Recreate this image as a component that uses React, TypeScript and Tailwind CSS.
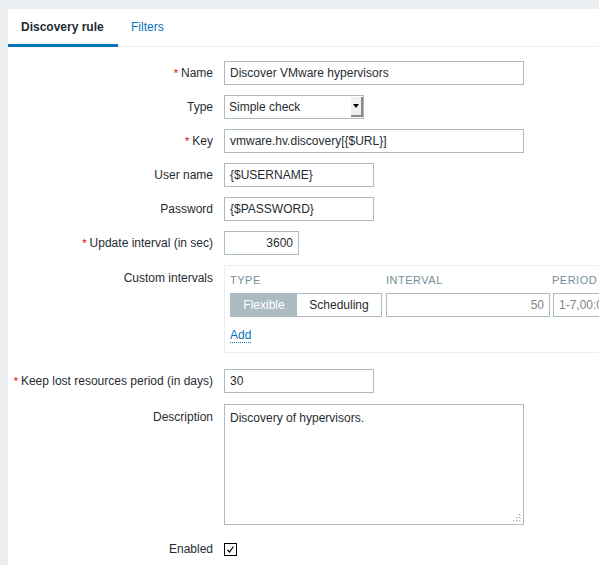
import React from "react";

const inputCls =
  "h-[24px] border border-[#acbbc2] bg-white px-[5px] flex items-center text-[12px] text-[#1f2c33]";

function Label({ text, required, top }: { text: string; required?: boolean; top?: boolean }) {
  return (
    <div
      className={`w-[205px] shrink-0 flex justify-end text-[12px] text-[#1f2c33] ${
        top ? "items-start pt-[4px]" : "items-center h-[24px]"
      }`}
    >
      {required && <span className="text-[#d40000] mr-[3px] text-[11px]">*</span>}
      <span>{text}</span>
    </div>
  );
}

function Row({ children, className = "" }: { children: React.ReactNode; className?: string }) {
  return <div className={`flex gap-[11px] ${className}`}>{children}</div>;
}

export default function App() {
  return (
    <div
      className="w-[599px] h-[565px] bg-[#ebeef0] pl-[8px] pt-[9px] overflow-hidden"
      style={{ fontFamily: '"Liberation Sans", Arial, sans-serif' }}
    >
      <div className="bg-white h-full pt-[1px]">
        {/* tabs */}
        <div className="flex h-[37px] border-b border-[#ebeef0] items-stretch">
          <div className="px-[13px] flex items-center border-b-[3px] border-[#0275b8] text-[12px] font-bold text-[#1f2c33] w-[110px] -mb-[1px]">
            Discovery rule
          </div>
          <div className="px-[13px] flex items-center text-[12px] text-[#0275b8] pb-[3px]">Filters</div>
        </div>

        {/* form */}
        <div className="pt-[14px] flex flex-col">
          <Row className="mb-[10px]">
            <Label text="Name" required />
            <div className={`${inputCls} w-[300px]`}>Discover VMware hypervisors</div>
          </Row>
          <Row className="mb-[10px]">
            <Label text="Type" />
            <div className="h-[24px] w-[140px] border border-[#acbbc2] bg-white flex items-stretch text-[12px] text-[#1f2c33]">
              <div className="flex-1 flex items-center pl-[4px]">Simple check</div>
              <div className="w-[12px] my-[1px] bg-[#f0f0f0] border-r-2 border-b-2 border-[#8a8a8a] flex items-center justify-center">
                <svg width="6" height="4" viewBox="0 0 6 4">
                  <path d="M0 0H6L3 4Z" fill="#000" />
                </svg>
              </div>
            </div>
          </Row>
          <Row className="mb-[10px]">
            <Label text="Key" required />
            <div className={`${inputCls} w-[300px]`}>vmware.hv.discovery[{"{$URL}"}]</div>
          </Row>
          <Row className="mb-[10px]">
            <Label text="User name" />
            <div className={`${inputCls} w-[150px]`}>{"{$USERNAME}"}</div>
          </Row>
          <Row className="mb-[10px]">
            <Label text="Password" />
            <div className={`${inputCls} w-[150px]`}>{"{$PASSWORD}"}</div>
          </Row>
          <Row className="mb-[10px]">
            <Label text="Update interval (in sec)" required />
            <div className={`${inputCls} w-[75px] justify-end`}>3600</div>
          </Row>
          <Row className="mb-[16px]">
            <Label text="Custom intervals" top />
            <div className="flex-1 border border-r-0 border-[#ebeef0] pl-[5px] pt-[8px] h-[88px]">
              <div className="flex text-[11px] tracking-[0.5px] text-[#768d99] mb-[7px] h-[12px] items-center">
                <div className="w-[156px]">TYPE</div>
                <div className="w-[166px]">INTERVAL</div>
                <div>PERIOD</div>
              </div>
              <div className="flex items-center">
                <div className="flex h-[24px] w-[152px] border border-[#acbbc2] text-[12px]">
                  <div className="w-[66px] bg-[#acbbc2] text-white flex items-center justify-center">Flexible</div>
                  <div className="flex-1 bg-white text-[#1f2c33] flex items-center justify-center">Scheduling</div>
                </div>
                <div className={`${inputCls} w-[164px] justify-end ml-[4px] text-[#7a8790]`}>50</div>
                <div className={`${inputCls} w-[60px] ml-[3px] text-[#7a8790] overflow-hidden whitespace-nowrap`}>
                  1-7,00:00-24:00
                </div>
              </div>
              <div className="mt-[10px] h-[18px] flex items-center">
                <span className="text-[12px] text-[#0275b8] border-b border-dotted border-[#0275b8] leading-[13px]">
                  Add
                </span>
              </div>
            </div>
          </Row>
          <Row className="mb-[11px]">
            <Label text="Keep lost resources period (in days)" required />
            <div className={`${inputCls} w-[150px]`}>30</div>
          </Row>
          <Row className="mb-[12px]">
            <Label text="Description" top />
            <div className="relative h-[121px] w-[300px] border border-[#acbbc2] bg-white px-[5px] pt-[4px] text-[12px] text-[#1f2c33]">
              Discovery of hypervisors.
              <svg className="absolute right-[1px] bottom-[1px]" width="10" height="10" viewBox="0 0 10 10">
                <rect x="7" y="1" width="1" height="1" fill="#999" />
                <rect x="7" y="4" width="1" height="1" fill="#999" />
                <rect x="4" y="4" width="1" height="1" fill="#999" />
                <rect x="7" y="7" width="1" height="1" fill="#999" />
                <rect x="4" y="7" width="1" height="1" fill="#999" />
                <rect x="1" y="7" width="1" height="1" fill="#999" />
                <rect x="8" y="2" width="1" height="1" fill="#ccc" />
                <rect x="8" y="5" width="1" height="1" fill="#ccc" />
                <rect x="5" y="5" width="1" height="1" fill="#ccc" />
                <rect x="8" y="8" width="1" height="1" fill="#ccc" />
                <rect x="5" y="8" width="1" height="1" fill="#ccc" />
                <rect x="2" y="8" width="1" height="1" fill="#ccc" />
              </svg>
            </div>
          </Row>
          <Row>
            <Label text="Enabled" />
            <div className="h-[24px] flex items-center">
              <div className="w-[13px] h-[13px] border border-black bg-white flex items-center justify-center">
                <svg width="9" height="9" viewBox="0 0 9 9">
                  <path d="M1.5 5L3.5 7L7.5 1.5" stroke="#000" strokeWidth="1.2" fill="none" />
                </svg>
              </div>
            </div>
          </Row>
        </div>
      </div>
    </div>
  );
}
